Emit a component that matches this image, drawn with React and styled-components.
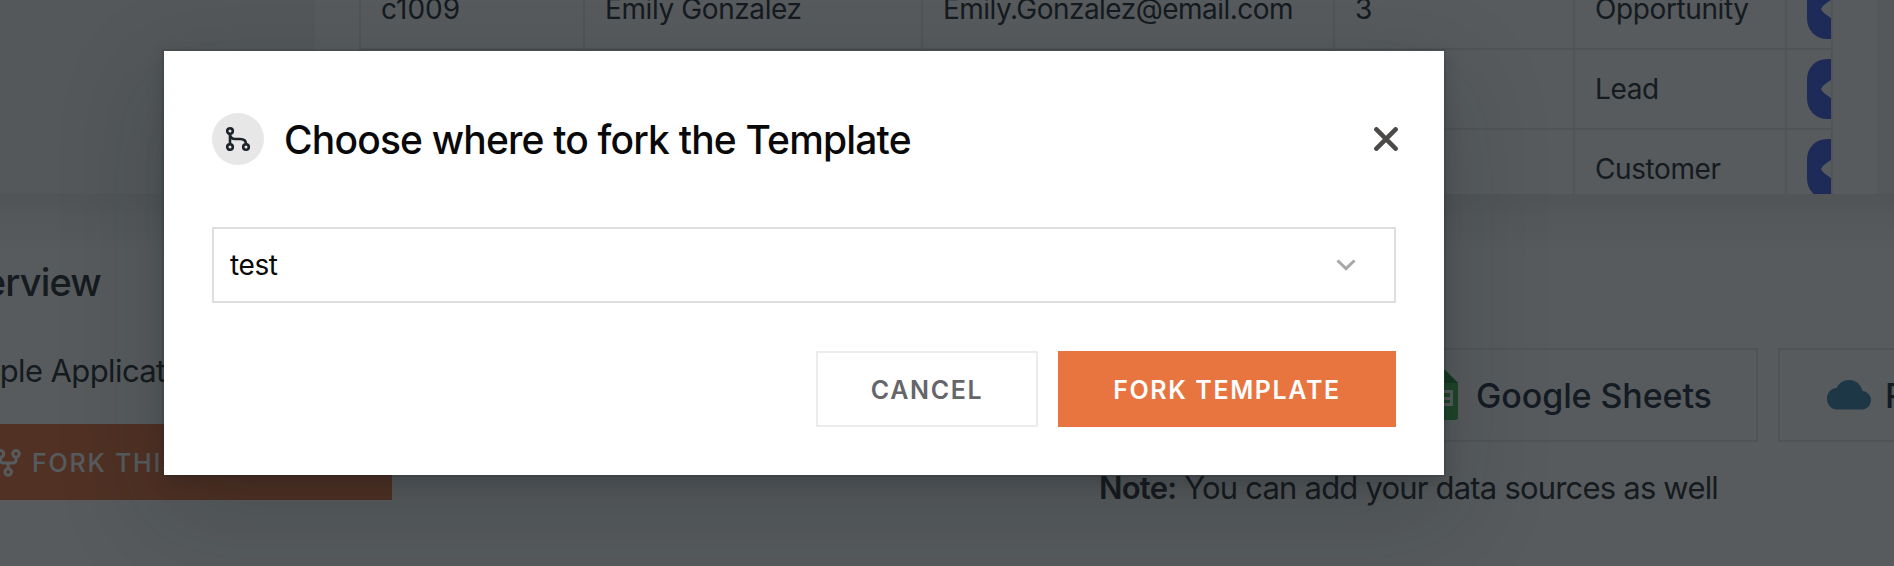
import React from 'react';
import styled, { createGlobalStyle } from 'styled-components';

const Global = createGlobalStyle`
  * { box-sizing: border-box; }
  html, body { margin: 0; overflow: hidden; background: #fff; }
  body { font-family: Inter, "Liberation Sans", sans-serif; color: #26282d; }
`;

const Page = styled.div`
  position: relative;
  width: 1894px;
  height: 566px;
  overflow: hidden;
`;

const Preview = styled.section`
  height: 194px;
  background: #f3f3f3;
  padding: 0 17px 0 315px;
  overflow: hidden;
`;

const Card = styled.div`
  height: 194px;
  background: #fdfdfd;
  padding: 0 44px;
  overflow: hidden;
`;

const Table = styled.div`
  width: 1474px;
  margin-top: -30px;
  border: 2px solid #e6e6e6;
  border-width: 0 2px;
  overflow: hidden;
`;

const Row = styled.div`
  display: grid;
  grid-template-columns: 224px 338px 412px 240px 212px 100px;
  height: 80px;
  border-bottom: 2px solid #e6e6e6;
`;

const Cell = styled.div`
  display: flex;
  align-items: center;
  padding: 0 20px;
  border-right: 2px solid #e6e6e6;
  font-size: 28px;
  letter-spacing: ${(p) => p.$spacing || '-0.4px'};
  white-space: nowrap;
`;

const Pill = styled.div`
  flex: none;
  display: flex;
  align-items: center;
  width: 80px;
  height: 60px;
  padding-left: 14px;
  border-radius: 20px;
  background: #425fec;
`;

const Lower = styled.main`
  display: flex;
  justify-content: space-between;
  height: 372px;
  background: linear-gradient(#e8e8e8, #f3f3f3 24px, #fefefe 60px);
`;

const Overview = styled.section`
  width: 392px;
  padding-top: 64px;
`;

const Heading = styled.h2`
  margin: 0 0 0 -65px;
  font-size: 38px;
  line-height: 48px;
  font-weight: 500;
  letter-spacing: -0.8px;
`;

const Summary = styled.p`
  margin: 45px 0 0 -63px;
  font-size: 31px;
  line-height: 40px;
  letter-spacing: -0.6px;
  white-space: nowrap;
`;

const ForkBar = styled.button`
  display: flex;
  align-items: center;
  gap: 11px;
  width: 452px;
  height: 76px;
  margin: 33px 0 0 -60px;
  padding: 2px 0 0 56px;
  border: 0;
  background: #e8743f;
  color: #fff;
  font: 500 25px Inter, sans-serif;
  letter-spacing: 1.8px;
  white-space: nowrap;
`;

const Sources = styled.section`
  width: 795px;
  padding-top: 154px;
  overflow: hidden;
`;

const Chips = styled.div`
  display: flex;
  gap: 20px;
  margin-left: 273px;
`;

const Chip = styled.div`
  flex: none;
  display: flex;
  align-items: center;
  gap: ${(p) => p.$gap};
  width: ${(p) => p.$width};
  height: 94px;
  padding-left: 47px;
  border: 2px solid #e8e8e8;
  font-size: 34px;
  font-weight: 500;
  letter-spacing: -0.1px;
  white-space: nowrap;
  color: #24283a;
`;

const Note = styled.p`
  margin: 26px 0 0;
  font-size: 31px;
  line-height: 40px;
  letter-spacing: -0.8px;
  white-space: nowrap;
  b { font-weight: 600; }
`;

const Backdrop = styled.div`
  position: absolute;
  inset: 0;
  padding: 51px 0 0 164px;
  background: rgba(16, 22, 26, 0.7);
`;

const Dialog = styled.div`
  width: 1280px;
  height: 424px;
  padding: 62px 48px 48px;
  background: #fff;
  color: #090909;
  box-shadow: 0 0 0 2px rgba(16, 22, 26, 0.1), 0 8px 16px rgba(16, 22, 26, 0.2),
    0 36px 92px 12px rgba(16, 22, 26, 0.16);
`;

const DialogHeader = styled.header`
  display: flex;
  align-items: center;
  height: 52px;
  margin-right: -2px;
`;

const RoundIcon = styled.span`
  display: flex;
  align-items: center;
  justify-content: center;
  width: 52px;
  height: 52px;
  margin-right: 20px;
  border-radius: 50%;
  background: #e7e7e7;
`;

const Title = styled.h1`
  flex: 1;
  margin: 0;
  padding-top: 2px;
  font-size: 39px;
  line-height: 48px;
  font-weight: 500;
  letter-spacing: -0.82px;
`;

const CloseButton = styled.button`
  display: flex;
  padding: 0;
  border: 0;
  background: none;
`;

const Select = styled.div`
  display: flex;
  align-items: center;
  justify-content: space-between;
  height: 76px;
  margin-top: 62px;
  padding: 0 38px 0 16px;
  border: 2px solid #dedede;
  font-size: 28px;
  letter-spacing: -0.4px;
`;

const Actions = styled.footer`
  display: flex;
  justify-content: flex-end;
  gap: 20px;
  margin-top: 48px;
`;

const Action = styled.button`
  width: ${(p) => (p.$primary ? '338px' : '222px')};
  height: 76px;
  padding: 2px 0 0;
  border: 2px solid ${(p) => (p.$primary ? '#e8743f' : '#ececec')};
  background: ${(p) => (p.$primary ? '#e8743f' : '#fff')};
  color: ${(p) => (p.$primary ? '#fff' : '#65666a')};
  font: 600 25px Inter, sans-serif;
  letter-spacing: 1.6px;
`;

const Eye = () => (
  <svg width="44" height="30" viewBox="0 0 44 30">
    <path d="M0 15Q1 12 7 8Q22-3 37 8Q43 12 44 15Q43 18 37 22Q22 33 7 22Q1 18 0 15Z" fill="#fff" />
  </svg>
);

const BranchIcon = () => (
  <svg width="26" height="26" viewBox="0 0 26 26" fill="none" stroke="#1d2329" strokeWidth="2.6">
    <circle cx="5" cy="5" r="2.8" />
    <circle cx="5" cy="21" r="2.8" />
    <circle cx="21" cy="21" r="2.8" />
    <path d="M5 8V18M5 9Q6 13 10 13H15Q21 13 21 18" />
  </svg>
);

const ForkIcon = () => (
  <svg width="25" height="28" viewBox="0 0 25 28" fill="none" stroke="#fff" strokeWidth="2.9">
    <circle cx="4.500" cy="4.800" r="3.300" />
    <circle cx="20" cy="4.800" r="3.300" />
    <circle cx="12.200" cy="23" r="3.300" />
    <path d="M4.500 8V11Q4.500 14 7.500 14H17Q20 14 20 11V8M12.200 14V19.500" />
  </svg>
);

const SheetsIcon = () => (
  <svg width="37" height="50" viewBox="0 0 37 50">
    <path d="M3 0H24L37 13V47Q37 50 34 50H3Q0 50 0 47V3Q0 0 3 0Z" fill="#43b850" />
    <path d="M24 0L37 13H24Z" fill="#278a35" />
    <path d="M8 20H32V36H8ZM11 23V27H18V23ZM22 23V27H29V23ZM11 30V33H18V30ZM22 30V33H29V30Z" fill="#fff" fillRule="evenodd" />
  </svg>
);

const CloudIcon = () => (
  <svg width="44" height="30" viewBox="0 0 44 30">
    <path d="M10 29.500C4 29.500 0 24.500 0 18.500C0 12.500 4 8.500 9.500 8C12 3 16.500 0 22 0C29 0 34 4.500 35.500 11C40.500 11.500 44 15.500 44 20C44 25 40 29.500 35 29.500Z" fill="#3d85ad" />
  </svg>
);

const CloseIcon = () => (
  <svg width="24" height="24" viewBox="0 0 24 24" fill="none" stroke="#4b4a49" strokeWidth="4.6" strokeLinecap="round">
    <path d="M2.400 2.400L21.600 21.600M21.600 2.400L2.400 21.600" />
  </svg>
);

const ChevronIcon = () => (
  <svg width="20" height="12" viewBox="0 0 20 12" fill="none" stroke="#a8a8a8" strokeWidth="3">
    <path d="M1.500 1.500L10 9.700L18.500 1.500" />
  </svg>
);

const columnSpacing = ['0', undefined, '-0.52px', undefined, undefined];

const rows = [
  ['c1009', 'Emily Gonzalez', 'Emily.Gonzalez@email.com', '3', 'Opportunity'],
  ['', '', '', '', 'Lead'],
  ['', '', '', '', 'Customer'],
];

export default function App() {
  return (
    <Page>
      <Global />
      <Preview>
        <Card>
          <Table>
            {rows.map((row, i) => (
              <Row key={i}>
                {row.map((text, j) => (
                  <Cell key={j} $spacing={columnSpacing[j]}>{text}</Cell>
                ))}
                <Cell>
                  <Pill><Eye /></Pill>
                </Cell>
              </Row>
            ))}
          </Table>
        </Card>
      </Preview>
      <Lower>
        <Overview>
          <Heading>Overview</Heading>
          <Summary>Sample Application</Summary>
          <ForkBar><ForkIcon />FORK THIS TEMPLATE</ForkBar>
        </Overview>
        <Sources>
          <Chips>
            <Chip $width="386px" $gap="18px"><SheetsIcon />Google Sheets</Chip>
            <Chip $width="300px" $gap="14px"><CloudIcon />REST API</Chip>
          </Chips>
          <Note><b>Note:</b> You can add your data sources as well</Note>
        </Sources>
      </Lower>
      <Backdrop>
        <Dialog>
          <DialogHeader>
            <RoundIcon><BranchIcon /></RoundIcon>
            <Title>Choose where to fork the Template</Title>
            <CloseButton aria-label="Close"><CloseIcon /></CloseButton>
          </DialogHeader>
          <Select>test<ChevronIcon /></Select>
          <Actions>
            <Action>CANCEL</Action>
            <Action $primary>FORK TEMPLATE</Action>
          </Actions>
        </Dialog>
      </Backdrop>
    </Page>
  );
}
